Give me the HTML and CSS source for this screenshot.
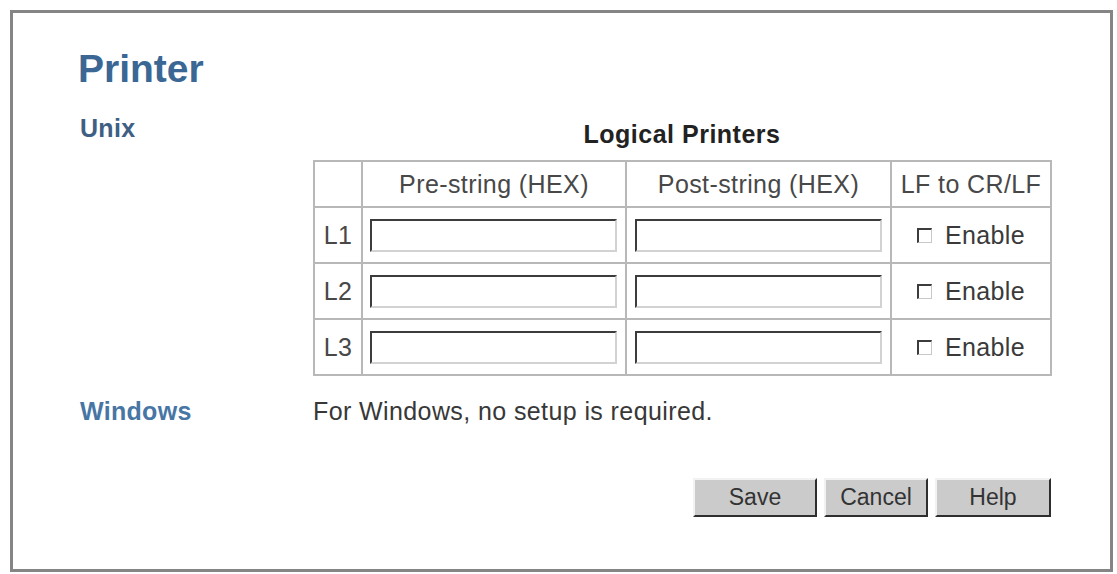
FILE: index.html
```html
<!DOCTYPE html>
<html lang="en">
<head>
<meta charset="utf-8">
<title>Printer</title>
<link rel="stylesheet" href="styles.css">
</head>
<body>
<div class="frame">
  <h1 class="page-title">Printer</h1>
  <div class="layout">
    <div class="section-label unix">Unix</div>
    <div class="section-body">
      <div class="caption">Logical Printers</div>
      <table class="printers">
        <colgroup>
          <col class="c-id"><col class="c-pre"><col class="c-post"><col class="c-lf">
        </colgroup>
        <thead>
          <tr>
            <th></th>
            <th>Pre-string (HEX)</th>
            <th>Post-string (HEX)</th>
            <th>LF to CR/LF</th>
          </tr>
        </thead>
        <tbody>
          <tr>
            <td class="id">L1</td>
            <td class="pre"><input type="text" class="hex"></td>
            <td class="post"><input type="text" class="hex"></td>
            <td class="lf"><label><input type="checkbox" class="chk">Enable</label></td>
          </tr>
          <tr>
            <td class="id">L2</td>
            <td class="pre"><input type="text" class="hex"></td>
            <td class="post"><input type="text" class="hex"></td>
            <td class="lf"><label><input type="checkbox" class="chk">Enable</label></td>
          </tr>
          <tr>
            <td class="id">L3</td>
            <td class="pre"><input type="text" class="hex"></td>
            <td class="post"><input type="text" class="hex"></td>
            <td class="lf"><label><input type="checkbox" class="chk">Enable</label></td>
          </tr>
        </tbody>
      </table>
    </div>

    <div class="section-label windows">Windows</div>
    <div class="section-body note">For Windows, no setup is required.</div>

    <div class="actions">
      <button type="button" class="btn btn-save">Save</button>
      <button type="button" class="btn btn-cancel">Cancel</button>
      <button type="button" class="btn btn-help">Help</button>
    </div>
  </div>
</div>
</body>
</html>
```

FILE: styles.css
```css
html, body {
  margin: 0;
  padding: 0;
  background: #ffffff;
}

body {
  font-family: "Liberation Sans", Arial, sans-serif;
  color: #3a3a3a;
}

.frame {
  box-sizing: border-box;
  margin: 10px 0 0 10px;
  width: 1103px;
  height: 562px;
  border: 3px solid #858585;
  padding: 34px 0 0 65px;
}

.page-title {
  margin: 0;
  font-size: 39px;
  line-height: 44px;
  font-weight: bold;
  color: #3a6794;
}

.layout {
  display: grid;
  grid-template-columns: 235px 738px;
  margin-top: 22px;
}

.section-label {
  padding-left: 2px;
  font-size: 25px;
  line-height: 30px;
  font-weight: bold;
  letter-spacing: 0.3px;
}

.section-label.unix {
  color: #3f5f84;
}

.section-label.windows {
  color: #4776a5;
  margin-top: 20px;
}

.caption {
  margin-top: 6px;
  margin-bottom: 11px;
  text-align: center;
  font-size: 25px;
  line-height: 30px;
  font-weight: bold;
  letter-spacing: 0.5px;
  color: #222222;
}

.printers {
  border-collapse: collapse;
  width: 738px;
  table-layout: fixed;
  font-size: 25px;
  letter-spacing: 0.4px;
  color: #484848;
}

.printers th,
.printers td {
  border: 2px solid #b8b8b8;
  padding: 0;
  vertical-align: middle;
}

.printers th {
  height: 44px;
  font-weight: normal;
  text-align: center;
  white-space: nowrap;
}

.printers td {
  height: 54px;
}

.c-id { width: 48px; }
.c-pre { width: 264px; }
.c-post { width: 265px; }
.c-lf { width: 160px; }

.printers td.id {
  text-align: center;
}

.printers td.pre {
  padding-left: 7px;
}

.printers td.post {
  padding-left: 8px;
}

.hex {
  box-sizing: border-box;
  display: block;
  width: 247px;
  height: 33px;
  margin: 0;
  padding: 0 4px;
  border: 2px solid;
  border-color: #3c3c3c #d2d2d2 #d2d2d2 #3c3c3c;
  background: #ffffff;
  font: inherit;
  font-size: 18px;
}

.printers td.lf {
  text-align: center;
}

.printers td.lf label {
  display: inline-flex;
  align-items: center;
  gap: 13px;
  color: #3a3a3a;
}

.chk {
  appearance: none;
  -webkit-appearance: none;
  box-sizing: border-box;
  width: 15px;
  height: 15px;
  margin: 1px 0 0 0;
  border-style: solid;
  border-width: 2px 1px 1px 2px;
  border-color: #3c3c3c #c8c8c8 #c8c8c8 #3c3c3c;
  background: #ffffff;
}

.note {
  margin-top: 20px;
  font-size: 25px;
  line-height: 30px;
  letter-spacing: 0.4px;
  color: #383838;
}

.actions {
  grid-column: 2;
  display: flex;
  justify-content: flex-end;
  gap: 7px;
  margin-top: 52px;
}

.btn {
  box-sizing: border-box;
  height: 39px;
  padding: 0;
  border: 2px solid;
  border-color: #f2f2f2 #2e2e2e #2e2e2e #f2f2f2;
  background: #cbcbcb;
  font-family: "Liberation Sans", Arial, sans-serif;
  font-size: 23px;
  color: #333333;
}

.btn-save { width: 124px; }
.btn-cancel { width: 104px; }
.btn-help { width: 116px; }
```
